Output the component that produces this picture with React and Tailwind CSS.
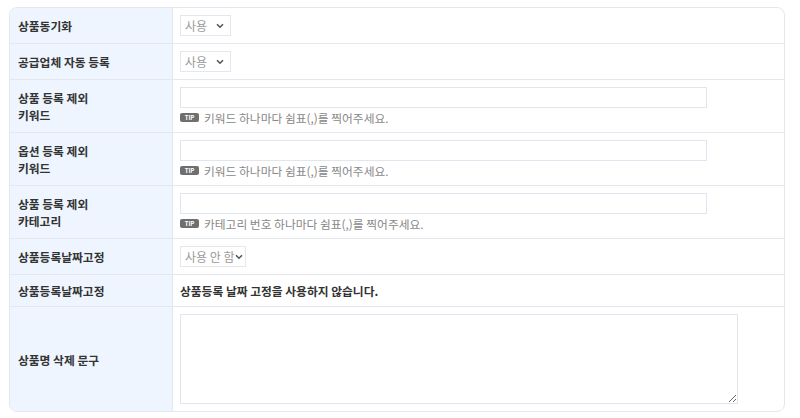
const FONT = { fontFamily: '"Noto Sans CJK KR", "Noto Sans", sans-serif' };

function Chevron() {
  return (
    <svg width="8" height="6" viewBox="0 0 8 6" className="shrink-0">
      <path d="M1 1.2 L4 4.2 L7 1.2" fill="none" stroke="#555" strokeWidth="1.6" />
    </svg>
  );
}

function FakeSelect({ label, width, gap }) {
  return (
    <div className={`flex items-center h-[21px] border border-[#e2e8ef] bg-white pl-[4px] pr-[6px] whitespace-nowrap ${width}`}>
      <span className="text-[12px] text-[#9a9a9a] leading-none">{label}</span>
      <span className={gap}></span>
      <Chevron />
    </div>
  );
}

function Tip({ text }) {
  return (
    <div className="flex items-center gap-[5px] mt-[2px] h-[15px]">
      <span className="flex items-center justify-center w-[19px] h-[9px] rounded-[2px] bg-[#6f6f6f] text-white text-[6px] font-bold leading-none">TIP</span>
      <span className="text-[11.75px] text-[#888] leading-none whitespace-nowrap">{text}</span>
    </div>
  );
}

function Row({ label, h, children, last, align = 'items-center' }) {
  return (
    <div className={`flex ${last ? '' : 'border-b border-[#e4e7eb]'}`} style={{ height: h }}>
      <div className="w-[163px] shrink-0 bg-[#eef5fe] border-r border-[#e4e7eb] pl-[8px] flex items-center">
        <span className="text-[11.75px] font-semibold text-[#333] leading-[17px]">{label}</span>
      </div>
      <div className={`flex-1 pl-[7px] flex ${align}`}>{children}</div>
    </div>
  );
}

export default function App() {
  return (
    <div className="w-[800px] h-[418px] bg-white pt-[7px] pl-[9px]" style={FONT}>
      <div className="w-[776px] border border-[#e4e7eb] rounded-[8px] overflow-hidden">
        <Row label="상품동기화" h={36}>
          <FakeSelect label="사용" width="w-[51px]" gap="flex-1" />
        </Row>
        <Row label="공급업체 자동 등록" h={36}>
          <FakeSelect label="사용" width="w-[51px]" gap="flex-1" />
        </Row>
        <Row label={<>상품 등록 제외<br />키워드</>} h={53}>
          <div className="flex flex-col">
            <div className="w-[527px] h-[21px] border border-[#dfe6ee] bg-white"></div>
            <Tip text="키워드 하나마다 쉼표(,)를 찍어주세요." />
          </div>
        </Row>
        <Row label={<>옵션 등록 제외<br />키워드</>} h={53}>
          <div className="flex flex-col">
            <div className="w-[527px] h-[21px] border border-[#dfe6ee] bg-white"></div>
            <Tip text="키워드 하나마다 쉼표(,)를 찍어주세요." />
          </div>
        </Row>
        <Row label={<>상품 등록 제외<br />카테고리</>} h={53}>
          <div className="flex flex-col">
            <div className="w-[527px] h-[21px] border border-[#dfe6ee] bg-white"></div>
            <Tip text="카테고리 번호 하나마다 쉼표(,)를 찍어주세요." />
          </div>
        </Row>
        <Row label="상품등록날짜고정" h={36}>
          <FakeSelect label="사용 안 함" width="w-[66px]" gap="w-[1px]" />
        </Row>
        <Row label="상품등록날짜고정" h={32}>
          <span className="text-[11.75px] font-semibold text-[#333] leading-none">상품등록 날짜 고정을 사용하지 않습니다.</span>
        </Row>
        <Row label="상품명 삭제 문구" h={104} last>
          <textarea className="w-[558px] h-[90px] border border-[#dfe6ee] bg-white outline-none"></textarea>
        </Row>
      </div>
    </div>
  );
}
